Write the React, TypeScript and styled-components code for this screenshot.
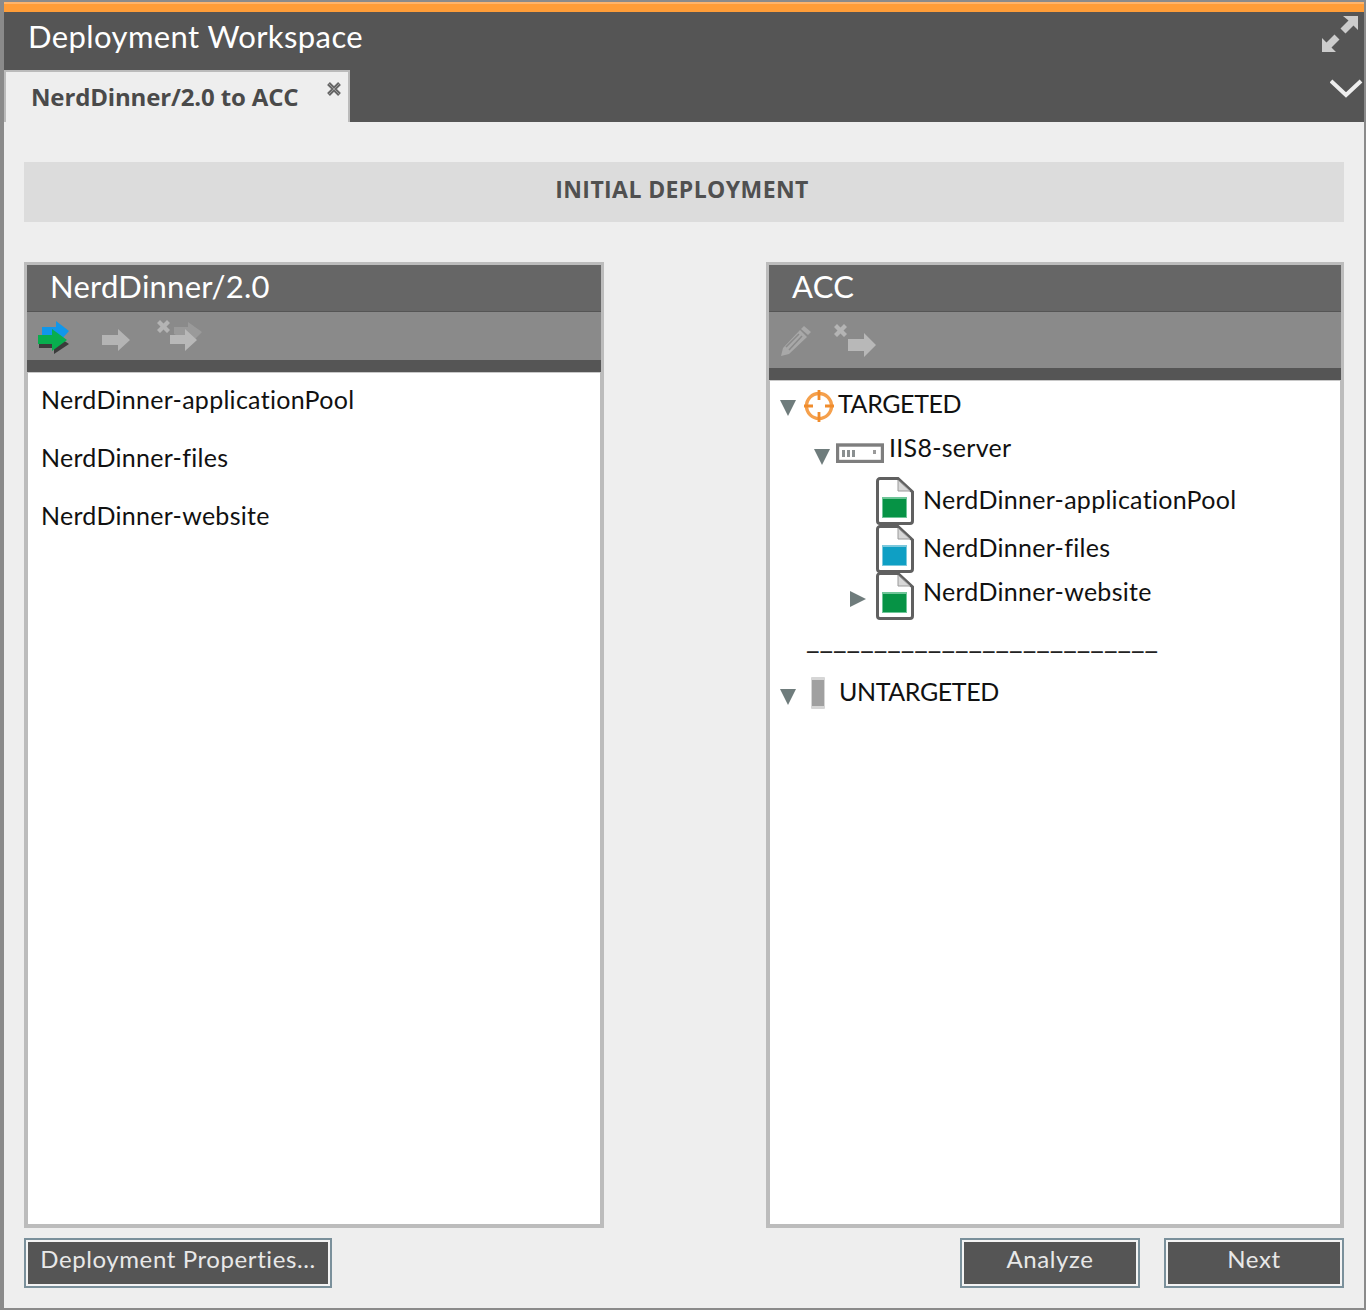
import React from 'react';
import styled, { createGlobalStyle } from 'styled-components';

const GlobalStyle = createGlobalStyle`
  html, body {
    margin: 0;
    padding: 0;
    background: #eee;
  }
  * {
    box-sizing: border-box;
  }
`;

const Expand = () => (
  <svg width="36" height="36" viewBox="0 0 36 36">
    <path d="M21 0h15v14l-4.500-4.500-8 8-5-5 8-8zM0 36V22l4.500 4.500 8-8 5 5-8 8L14 36z" fill="#cccccc" />
  </svg>
);

const Chevron = () => (
  <svg width="34" height="22" viewBox="0 0 34 22">
    <path d="M1 3l15 14L31 3" fill="none" stroke="#eeeeee" strokeWidth="4" />
  </svg>
);

const CloseMark = () => (
  <svg width="16" height="16" viewBox="0 0 16 16">
    <path d="M2.500 2.500l11 11M13.500 2.500l-11 11" stroke="#666" strokeWidth="4" />
    <path d="M3 3l10 10M13 3L3 13" stroke="#999" strokeWidth="1" />
  </svg>
);

const GreyArrow = () => (
  <svg width="30" height="22" viewBox="0 0 30 22">
    <path d="M0 6h16V0l12 11-12 11v-6H0z" fill="#b4b4b4" />
  </svg>
);

const MigrateIcon = () => (
  <svg width="36" height="34" viewBox="0 0 36 34">
    <path d="M3 20h15v-6l15 10-15 10v-6H3z" fill="#1a1a1a" opacity=".7" />
    <path d="M6 7h14V1l13 10-8 9h-5v-5H6z" fill="#1097ea" />
    <path d="M2 15h14v-6l15 11-15 11v-7H2z" fill="#08ae4e" />
  </svg>
);

const CrossMark = () => <path d="M0 3l3-3 3.500 3.500L10 0l3 3-3.500 3.500L13 10l-3 3-3.500-3.500L3 13l-3-3 3.500-3.500z" fill="#b4b4b4" />;

const UndoAllIcon = () => (
  <svg width="50" height="36" viewBox="0 0 50 36">
    <g transform="translate(3 3)">
      <CrossMark />
    </g>
    <path d="M20 10h14V5l14 10-9 9-3 2-16-9z" fill="#9a9a9a" />
    <path d="M16 18h15v-6l12 11-12 11v-7H16z" fill="#b8b8b8" />
  </svg>
);

const UndoIcon = () => (
  <svg width="44" height="36" viewBox="0 0 44 36">
    <g transform="translate(2 2)">
      <CrossMark />
    </g>
    <path d="M16 17h16v-6l12 12-12 12v-6H16z" fill="#b8b8b8" />
  </svg>
);

const PencilIcon = () => (
  <svg width="32" height="32" viewBox="0 0 32 32">
    <path d="M24 1l7 6-3 3-7-6z" fill="#a8a8a8" />
    <path d="M20 5l7 7L9 29 1 31l2-8z" fill="#a8a8a8" />
    <path d="M19 9L6 22M22 11L9 25" stroke="#8a8a8a" strokeWidth="1.500" />
  </svg>
);

const TargetIcon = () => (
  <svg width="32" height="32" viewBox="0 0 32 32">
    <circle cx="16" cy="16" r="12.500" fill="none" stroke="#f5a04c" strokeWidth="3.400" />
    <path d="M16 0v10M16 22v10M1 16h9M22 16h9" stroke="#f08c2c" strokeWidth="2.800" />
  </svg>
);

const ServerIcon = () => (
  <svg width="48" height="20" viewBox="0 0 48 20">
    <rect x="1.500" y="2" width="45" height="16.500" fill="#fff" stroke="#7e7e7e" strokeWidth="3.400" />
    <path d="M6 7h3v7H6zM11 7h3v7h-3zM16 7h3v7h-3z" fill="#8a8f90" />
    <rect x="37" y="7" width="3" height="4" fill="#9a9a9a" />
  </svg>
);

const FileIcon = ({ fill, edge }: { fill: string; edge: string }) => (
  <svg width="38" height="48" viewBox="0 0 38 48">
    <path d="M4 1.500h18L36.500 15v29a2.500 2.500 0 0 1-2.500 2.500H4A2.500 2.500 0 0 1 1.500 44V4A2.500 2.500 0 0 1 4 1.500z" fill="#fff" stroke="#606060" strokeWidth="3" />
    <path d="M22 3v11h12z" fill="#d8d8d8" stroke="#9a9a9a" strokeWidth="1" />
    <rect x="6" y="20" width="25" height="21" fill={edge} />
    <rect x="7" y="22" width="23" height="18" fill={fill} />
  </svg>
);

const UntargetedIcon = () => (
  <svg width="14" height="32" viewBox="0 0 14 32">
    <rect x="0" y="0" width="14" height="32" rx="1" fill="#d6d6d6" />
    <rect x="1" y="3" width="12" height="26" fill="#a0a0a0" />
  </svg>
);

const Window = styled.div`
  width: 1366px;
  height: 1310px;
  display: flex;
  flex-direction: column;
  background: #eeeeee;
  border: solid #8a8a8a;
  border-width: 2px 2px 2px 4px;
  font-family: Lato, 'Liberation Sans', sans-serif;
  overflow: hidden;
`;

const Accent = styled.div`
  height: 10px;
  flex: none;
  background: #ff9d38;
  border-top: 2px solid #ffb46a;
`;

const Header = styled.header`
  height: 110px;
  flex: none;
  position: relative;
  display: flex;
  flex-direction: column;
  justify-content: space-between;
  background: #555555;
`;

const Title = styled.h1`
  margin: 0;
  padding: 6px 0 0 24px;
  font-size: 31px;
  line-height: 36px;
  font-weight: 400;
  letter-spacing: 0.4px;
  color: #ffffff;
`;

const Tab = styled.div`
  width: 346px;
  height: 52px;
  position: relative;
  padding: 9px 0 0 25px;
  background: #eeeeee;
  border: solid #bbbbbb;
  border-width: 2px 2px 0 2px;
  font-family: 'Open Sans', sans-serif;
  font-size: 24px;
  line-height: 32px;
  font-weight: 700;
  letter-spacing: -0.15px;
  color: #4a4a4a;
`;

const TabClose = styled.span`
  position: absolute;
  top: 9px;
  right: 6px;
  display: flex;
`;

const WindowActions = styled.div`
  position: absolute;
  top: 4px;
  right: 0;
  display: flex;
  flex-direction: column;
  align-items: flex-end;
  gap: 26px;
`;

const ExpandButton = styled.span`
  display: flex;
  margin-right: 6px;
`;

const Body = styled.main`
  flex: 1;
  display: flex;
  flex-direction: column;
  padding: 40px 20px 20px 20px;
`;

const Banner = styled.div`
  height: 60px;
  flex: none;
  display: flex;
  align-items: center;
  justify-content: center;
  padding: 0 4px 7px 0;
  background: #dcdcdc;
  font-family: 'Open Sans', sans-serif;
  font-size: 23px;
  font-weight: 700;
  letter-spacing: 0.4px;
  color: #505050;
`;

const Columns = styled.div`
  height: 966px;
  flex: none;
  margin-top: 40px;
  display: flex;
  justify-content: space-between;
`;

const Panel = styled.section<{ $width: number }>`
  width: ${(p) => p.$width}px;
  display: flex;
  flex-direction: column;
  border: 3px solid #bcbcbc;
  background: #ffffff;
`;

const PanelTitle = styled.h2`
  height: 47px;
  flex: none;
  margin: 0;
  padding-left: 23px;
  background: #666666;
  border-bottom: 1px solid #555555;
  font-size: 31px;
  line-height: 42px;
  font-weight: 400;
  letter-spacing: 0.25px;
  color: #ffffff;
`;

const Toolbar = styled.div<{ $height: number }>`
  height: ${(p) => p.$height}px;
  flex: none;
  display: flex;
  align-items: flex-start;
  background: #8a8a8a;
  border-bottom: 12px solid #555555;
`;

const Tool = styled.span<{ $left: number; $top: number }>`
  display: flex;
  margin-left: ${(p) => p.$left}px;
  margin-top: ${(p) => p.$top}px;
`;

const List = styled.ul`
  flex: 1;
  margin: 0;
  padding: 0 0 0 13px;
  list-style: none;
  border: 1px solid #bcbcbc;
  border-top-color: #c8c8c8;
`;

const ListItem = styled.li`
  height: 58px;
  padding-top: 10px;
  font-size: 25px;
  line-height: 32px;
  letter-spacing: 0.28px;
  color: #111111;
`;

const Tree = styled.div`
  flex: 1;
  padding-top: 9px;
  border: 1px solid #bcbcbc;
  border-top-color: #c8c8c8;
`;

const Row = styled.div<{ $height: number; $indent: number }>`
  height: ${(p) => p.$height}px;
  position: relative;
  display: flex;
  align-items: flex-start;
  padding-left: ${(p) => p.$indent}px;
`;

const Twisty = styled.span<{ $open?: boolean; $top: number; $slot?: number }>`
  flex: none;
  width: 0;
  height: 0;
  margin-top: ${(p) => p.$top}px;
  margin-right: ${(p) => p.$slot ?? 7}px;
  ${(p) =>
    p.$open
      ? `border-left: 8px solid transparent;
         border-right: 8px solid transparent;
         border-top: 16px solid #6f7c7c;`
      : `border-top: 8px solid transparent;
         border-bottom: 8px solid transparent;
         border-left: 16px solid #6f7c7c;`}
`;

const NodeIcon = styled.span<{ $top: number }>`
  flex: none;
  display: flex;
  margin-top: ${(p) => p.$top}px;
`;

const NodeLabel = styled.span<{ $top: number; $left: number; $caps?: boolean }>`
  margin-top: ${(p) => p.$top}px;
  margin-left: ${(p) => p.$left}px;
  font-size: 25px;
  line-height: 32px;
  letter-spacing: ${(p) => (p.$caps ? '-0.4px' : '0.28px')};
  white-space: nowrap;
  color: #111111;
`;

const Divider = styled.div`
  height: 57px;
  padding: 2px 0 0 36px;
  font-size: 29.500px;
  line-height: 32px;
  color: #222222;
  white-space: nowrap;
`;

const Footer = styled.footer`
  margin-top: 10px;
  display: flex;
  justify-content: space-between;
`;

const FooterGroup = styled.div`
  display: flex;
  gap: 24px;
`;

const Button = styled.button<{ $width: number }>`
  width: ${(p) => p.$width}px;
  height: 50px;
  padding: 0 0 10px;
  border: 2px solid #7a909b;
  outline: 2px solid #f4f4f4;
  outline-offset: -4px;
  background: #555555;
  font-family: Lato, sans-serif;
  font-size: 24px;
  letter-spacing: 0.6px;
  color: #e8e8e8;
`;

const App: React.FC = () => {
  return (
    <>
      <GlobalStyle />
      <Window>
        <Accent />
        <Header>
          <Title>Deployment Workspace</Title>
          <Tab>
            NerdDinner/2.0 to ACC
            <TabClose>
              <CloseMark />
            </TabClose>
          </Tab>
          <WindowActions>
            <ExpandButton>
              <Expand />
            </ExpandButton>
            <Chevron />
          </WindowActions>
        </Header>
        <Body>
          <Banner>INITIAL DEPLOYMENT</Banner>
          <Columns>
            <Panel $width={580}>
              <PanelTitle>NerdDinner/2.0</PanelTitle>
              <Toolbar $height={60}>
                <Tool $left={9} $top={8}>
                  <MigrateIcon />
                </Tool>
                <Tool $left={30} $top={17}>
                  <GreyArrow />
                </Tool>
                <Tool $left={22} $top={5}>
                  <UndoAllIcon />
                </Tool>
              </Toolbar>
              <List>
                <ListItem>NerdDinner-applicationPool</ListItem>
                <ListItem>NerdDinner-files</ListItem>
                <ListItem>NerdDinner-website</ListItem>
              </List>
            </Panel>
            <Panel $width={578}>
              <PanelTitle>ACC</PanelTitle>
              <Toolbar $height={68}>
                <Tool $left={11} $top={13}>
                  <PencilIcon />
                </Tool>
                <Tool $left={20} $top={10}>
                  <UndoIcon />
                </Tool>
              </Toolbar>
              <Tree>
                <Row $height={46} $indent={10}>
                  <Twisty $open $top={10} />
                  <NodeIcon $top={0}>
                    <TargetIcon />
                  </NodeIcon>
                  <NodeLabel $top={-3} $left={3} $caps>TARGETED</NodeLabel>
                </Row>
                <Row $height={41} $indent={44}>
                  <Twisty $open $top={13} $slot={6} />
                  <NodeIcon $top={7}>
                    <ServerIcon />
                  </NodeIcon>
                  <NodeLabel $top={-5} $left={5}>IIS8-server</NodeLabel>
                </Row>
                <Row $height={48} $indent={106}>
                  <NodeIcon $top={0}>
                    <FileIcon fill="#069345" edge="#6fc598" />
                  </NodeIcon>
                  <NodeLabel $top={6} $left={9}>NerdDinner-applicationPool</NodeLabel>
                </Row>
                <Row $height={47} $indent={106}>
                  <NodeIcon $top={0}>
                    <FileIcon fill="#0f9fc4" edge="#7cc8dc" />
                  </NodeIcon>
                  <NodeLabel $top={6} $left={9}>NerdDinner-files</NodeLabel>
                </Row>
                <Row $height={48} $indent={80}>
                  <Twisty $top={19} $slot={10} />
                  <NodeIcon $top={0}>
                    <FileIcon fill="#069345" edge="#6fc598" />
                  </NodeIcon>
                  <NodeLabel $top={3} $left={9}>NerdDinner-website</NodeLabel>
                </Row>
                <Divider>__________________________</Divider>
                <Row $height={40} $indent={10}>
                  <Twisty $open $top={12} $slot={15} />
                  <NodeIcon $top={0}>
                    <UntargetedIcon />
                  </NodeIcon>
                  <NodeLabel $top={-2} $left={14} $caps>UNTARGETED</NodeLabel>
                </Row>
              </Tree>
            </Panel>
          </Columns>
          <Footer>
            <Button $width={308}>Deployment Properties...</Button>
            <FooterGroup>
              <Button $width={180}>Analyze</Button>
              <Button $width={180}>Next</Button>
            </FooterGroup>
          </Footer>
        </Body>
      </Window>
    </>
  );
};

export default App;
